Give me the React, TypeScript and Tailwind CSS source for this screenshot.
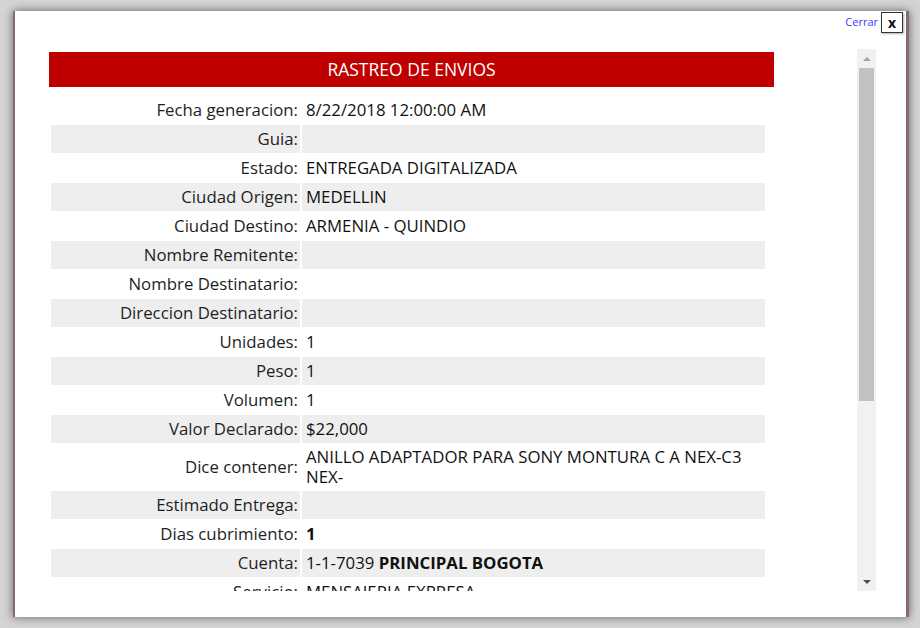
import React from 'react';

type Row = { label: string; value?: React.ReactNode; tall?: boolean };

const rows: Row[] = [
  { label: 'Fecha generacion:', value: '8/22/2018 12:00:00 AM' },
  { label: 'Guia:' },
  { label: 'Estado:', value: 'ENTREGADA DIGITALIZADA' },
  { label: 'Ciudad Origen:', value: 'MEDELLIN' },
  { label: 'Ciudad Destino:', value: 'ARMENIA - QUINDIO' },
  { label: 'Nombre Remitente:' },
  { label: 'Nombre Destinatario:' },
  { label: 'Direccion Destinatario:' },
  { label: 'Unidades:', value: '1' },
  { label: 'Peso:', value: '1' },
  { label: 'Volumen:', value: '1' },
  { label: 'Valor Declarado:', value: '$22,000' },
  { label: 'Dice contener:', value: 'ANILLO ADAPTADOR PARA SONY MONTURA C A NEX-C3 NEX-', tall: true },
  { label: 'Estimado Entrega:' },
  { label: 'Dias cubrimiento:', value: <b>1</b> },
  {
    label: 'Cuenta:',
    value: (
      <>
        1-1-7039 <b>PRINCIPAL BOGOTA</b>
      </>
    ),
  },
  { label: 'Servicio:', value: 'MENSAJERIA EXPRESA' },
];

function FakeScrollbar() {
  return (
    <div className="flex h-[542px] w-[19px] shrink-0 flex-col bg-[#f1f1f1]">
      <div className="flex h-[19px] items-center justify-center">
        <div className="h-0 w-0 border-x-[4px] border-b-[4px] border-x-transparent border-b-[#a3a3a3]" />
      </div>
      <div className="mx-[2px] h-[333px] bg-[#c1c1c1]" />
      <div className="flex-1" />
      <div className="flex h-[18px] items-center justify-center">
        <div className="h-0 w-0 border-x-[4px] border-t-[4px] border-x-transparent border-t-[#505050]" />
      </div>
    </div>
  );
}

export default function App() {
  return (
    <div
      className="h-[628px] w-[920px] overflow-hidden bg-[#d4d4d4] pl-[13px] pt-[11px] text-[#1e1e1e]"
      style={{ fontFamily: '"Open Sans", "Noto Sans", sans-serif' }}
    >
      <div className="flex h-[606px] w-[896px] flex-col border-l-2 border-r-[3px] border-[#8a6a6a] bg-white shadow-[0_0_9px_rgba(0,0,0,0.55)]">
        {/* close row */}
        <div className="flex h-[38px] items-start justify-end pr-[3px] pt-px">
          <a href="#" className="mr-[3px] mt-[2px] text-[11px] leading-[16px] text-[#3a3aff]">
            Cerrar
          </a>
          <button className="flex h-[21px] w-[22px] items-center justify-center border border-[#333] bg-white text-[14px] font-bold leading-none text-[#111] shadow-[1px_1px_2px_rgba(0,0,0,0.3)]">
            x
          </button>
        </div>

        {/* body */}
        <div className="flex pl-[34px] pr-[30px]">
          <div className="h-[542px] flex-1 overflow-hidden">
            <div className="mt-[3px] flex h-[35px] w-[725px] items-center justify-center bg-[#bf0000] text-[17.5px] text-white">
              RASTREO DE ENVIOS
            </div>
            <table className="mt-[8px] w-[718px] border-separate border-spacing-x-[2px] border-spacing-y-px text-[16.8px] leading-[20px]">
              <tbody>
                {rows.map((r, i) => (
                  <tr key={r.label} className={i % 2 === 1 ? 'bg-[#eeeeee]' : ''}>
                    <td
                      className={`w-[249px] whitespace-nowrap pr-[2px] text-right align-middle ${
                        r.tall ? 'py-[3px]' : 'py-[4px]'
                      }`}
                    >
                      {r.label}
                    </td>
                    <td
                      className={`w-[463px] pl-[4px] align-middle text-[#111] ${
                        r.tall ? 'py-[3px]' : 'py-[4px]'
                      }`}
                    >
                      {r.value}
                    </td>
                  </tr>
                ))}
              </tbody>
            </table>
          </div>
          <FakeScrollbar />
        </div>
      </div>
    </div>
  );
}
